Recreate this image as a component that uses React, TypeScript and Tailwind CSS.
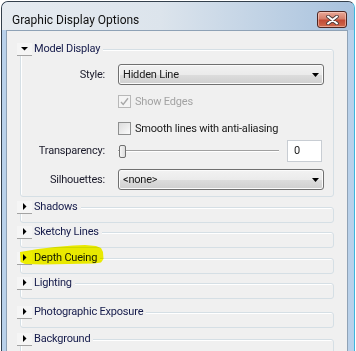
import type { ReactNode } from 'react';

const font = "font-['Roboto','Noto_Sans',sans-serif]";

function Arrow({ open }: { open?: boolean }) {
  return (
    <svg width="7" height="7" viewBox="0 0 7 7" className="block">
      {open ? <path d="M0 2h7L3.5 5.5z" fill="#000" /> : <path d="M2 0v7l3.5-3.5z" fill="#000" />}
    </svg>
  );
}

function Section({ title, open, className, children }: { title: string; open?: boolean; className?: string; children?: ReactNode }) {
  return (
    <div
      className={`ml-[13px] w-[314px] rounded-[3px] border border-[#d5dfe5] shadow-[inset_1px_1px_0_#fff] ${className ?? ''}`}
    >
      <div className="-mt-[8px] -ml-[4px] flex h-[14px] w-fit items-center bg-[#f0f0f0] pr-[3px]">
        <div className="flex h-[13px] w-[15px] items-center justify-center border-b border-[#a3a3a3] bg-[#f5f5f5]">
          <Arrow open={open} />
        </div>
        <span className="ml-[2px] leading-[14px] text-[#141a4a]">{title}</span>
      </div>
      {children}
    </div>
  );
}

function Combo({ value }: { value: string }) {
  return (
    <div className="flex h-[21px] w-[206px] items-center justify-between rounded-[3px] border border-[#707070] bg-[linear-gradient(#f2f2f2_0%,#ebebeb_50%,#dddddd_51%,#cfcfcf_100%)] pl-[4px] pr-[4px] shadow-[inset_0_0_0_1px_#fbfbfb]">
      <span className="leading-[14px] text-[#1a1a1a]">{value}</span>
      <svg width="7" height="4" viewBox="0 0 7 4" className="block">
        <path d="M0 0h7L3.5 4z" fill="#000" />
      </svg>
    </div>
  );
}

function Check({ label, checked, disabled, className }: { label: string; checked?: boolean; disabled?: boolean; className?: string }) {
  return (
    <div className={`ml-[97px] flex h-[13px] items-center ${className ?? ''}`}>
      <div
        className={`flex h-[13px] w-[13px] items-center justify-center border ${
          disabled ? 'border-[#b8b8b8] bg-[#f4f4f4]' : 'border-[#8e8f8f] bg-[linear-gradient(135deg,#dcdcdc,#fbfbfb)]'
        }`}
      >
        {checked && (
          <svg width="9" height="9" viewBox="0 0 9 9" className="block">
            <path d="M1 5l2.2 2.4L8 1.2" fill="none" stroke={disabled ? '#a8a8a8' : '#333'} strokeWidth="1.4" />
          </svg>
        )}
      </div>
      <span className={`ml-[4px] leading-[14px] ${disabled ? 'text-[#a3a3a3]' : 'text-[#1a1a1a]'}`}>{label}</span>
    </div>
  );
}

function Label({ children }: { children: ReactNode }) {
  return <div className="w-[84px] text-right leading-[14px] text-[#1a1a2a]">{children}</div>;
}

export default function App() {
  return (
    <div className={`relative h-[351px] w-[356px] overflow-hidden bg-white text-[11px] tracking-[-0.2px] ${font}`}>
      <div className="mt-[1px] ml-[1px] flex h-[360px] w-[354px] flex-col rounded-t-[7px] border border-b-0 border-[#34404c] border-r-[#3bb6de] bg-[#b9d1ea]">
        {/* title bar */}
        <div className="flex h-[28px] rounded-t-[6px] bg-[linear-gradient(90deg,#e6ebf0_0%,#dce4ec_45%,#a8c2de_100%)]">
          <div className="mt-[10px] ml-[10px] text-[12px] leading-[16px] tracking-normal text-[#101010]">Graphic Display Options</div>
          <div className="mt-[9px] mr-[7px] ml-auto flex h-[17px] w-[30px] items-center justify-center rounded-[3px] border border-[#4e2622] bg-[linear-gradient(#e9a898_0%,#d6806c_45%,#c24a35_55%,#cf6a4e_100%)] shadow-[inset_0_0_0_1px_rgba(255,220,210,0.5)]">
            <svg width="13" height="10" viewBox="0 0 13 10" className="block">
              <path d="M2 1.5l9 7M11 1.5l-9 7" stroke="#4a3a3a" strokeWidth="3.6" strokeLinecap="round" />
              <path d="M2 1.5l9 7M11 1.5l-9 7" stroke="#fff" strokeWidth="2" strokeLinecap="round" />
            </svg>
          </div>
        </div>

        {/* client */}
        <div className="mr-[6px] ml-[4px] flex-1 border border-[#8fa2b6] bg-[#f0f0f0]">
          <Section title="Model Display" open className="mt-[18px] h-[148px]">
            <div className="mt-[8px] flex items-center gap-[13px]">
              <Label>Style:</Label>
              <Combo value="Hidden Line" />
            </div>
            <Check label="Show Edges" checked disabled className="mt-[10px]" />
            <Check label="Smooth lines with anti-aliasing" className="mt-[14px]" />
            <div className="mt-[5px] flex h-[22px] items-center gap-[13px]">
              <Label>Transparency:</Label>
              <div className="flex items-center">
                <div className="relative flex h-[13px] w-[161px] items-center">
                  <div className="h-[2px] w-full border-t border-[#a0a0a0] bg-white" />
                  <div className="absolute top-0 left-[1px] h-[13px] w-[7px] rounded-[2px] border border-[#707070] bg-[linear-gradient(90deg,#f6f6f6,#dcdcdc)]" />
                </div>
                <div className="ml-[8px] flex h-[22px] w-[35px] items-center border border-[#c8cdd3] bg-white pl-[6px] leading-[14px] text-[#1a1a1a]">
                  0
                </div>
              </div>
            </div>
            <div className="mt-[7px] flex items-center gap-[13px]">
              <Label>Silhouettes:</Label>
              <Combo value="<none>" />
            </div>
          </Section>
          <Section title="Shadows" className="mt-[10px] h-[16px]" />
          <Section title="Sketchy Lines" className="mt-[9px] h-[16px]" />
          <Section title="Depth Cueing" className="mt-[10px] h-[16px]" />
          <Section title="Lighting" className="mt-[9px] h-[16px]" />
          <Section title="Photographic Exposure" className="mt-[13px] h-[16px]" />
          <Section title="Background" className="mt-[11px] h-[16px]" />
        </div>
      </div>

      {/* highlighter mark */}
      <svg width="88" height="23" viewBox="0 0 88 23" className="pointer-events-none absolute top-[243px] left-[18px] mix-blend-multiply">
        <path d="M2 9L20 6L37 4L55 2.5L67 2L78 3L83 5L85 9L85.5 16L83 19.5L76 20.5L50 21L25 21.5L7 21L2.5 19Z" fill="#f8f800" />
      </svg>
    </div>
  );
}
